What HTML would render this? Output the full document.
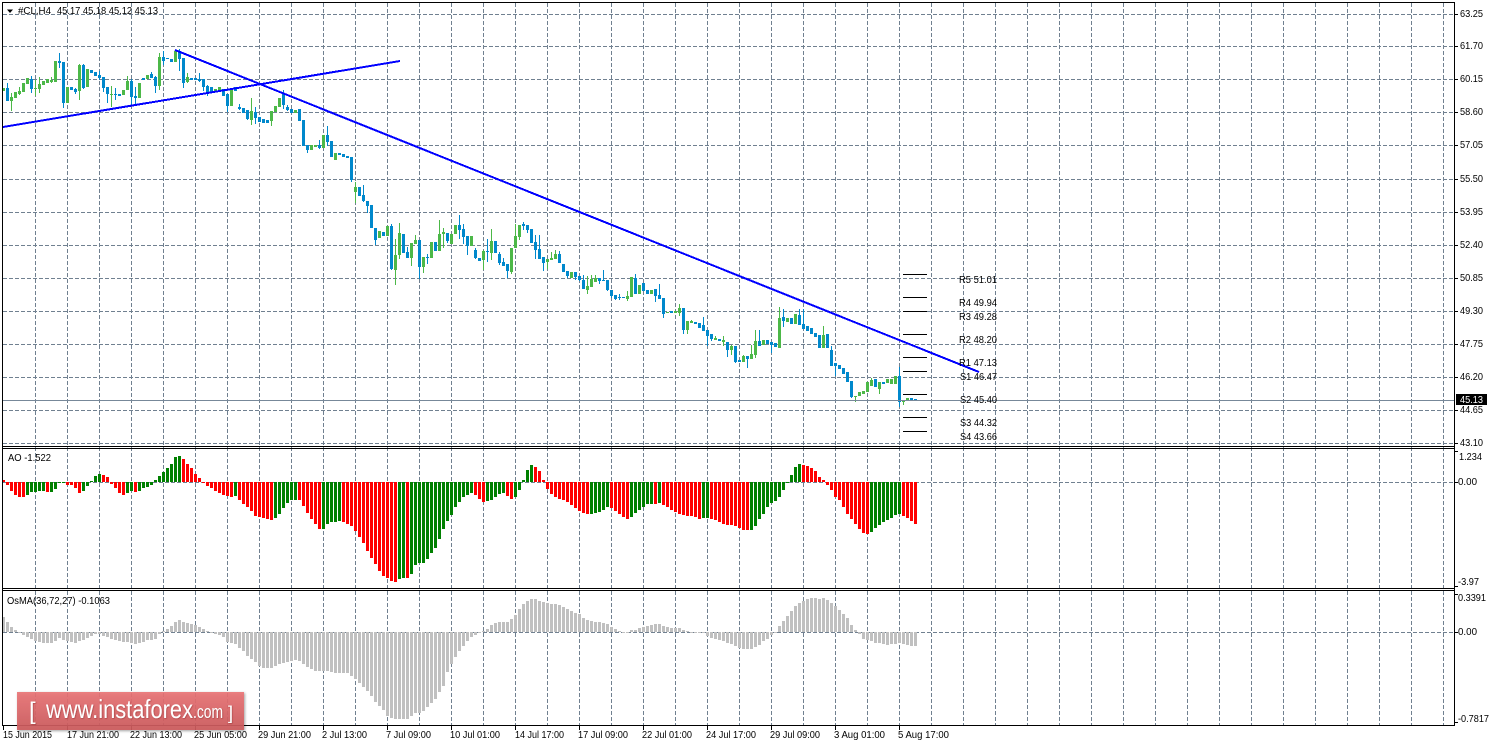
<!DOCTYPE html>
<html>
<head>
<meta charset="utf-8">
<title>#CL,H4</title>
<style>
html,body{margin:0;padding:0;background:#fff;width:1494px;height:743px;overflow:hidden}
svg{display:block;position:absolute;left:0;top:0}
text{font-family:"Liberation Sans",sans-serif;font-size:10.5px;fill:#000}
.s text{font-family:"Liberation Sans",sans-serif;fill:#fff}
</style>
</head>
<body>
<svg xmlns="http://www.w3.org/2000/svg" width="1494" height="743" viewBox="0 0 1494 743">
<g id="grid" stroke="#708090" stroke-width="1" stroke-dasharray="4 2" shape-rendering="crispEdges" fill="none"></g>
<path id="osma" fill="#c0c0c0" shape-rendering="crispEdges"/>
<path id="aog" fill="#008000" shape-rendering="crispEdges"/>
<path id="aor" fill="#ff0000" shape-rendering="crispEdges"/>
<path id="cg" fill="#4cb848" shape-rendering="crispEdges"/>
<path id="cb" fill="#0088cc" shape-rendering="crispEdges"/>
<path d="M3 400.5H1454" stroke="#778899" fill="none" shape-rendering="crispEdges"/>
<path d="M3 127L400 61" stroke="#0000ff" stroke-width="2" fill="none" shape-rendering="crispEdges"/>
<path d="M175 50L979 372" stroke="#0000ff" stroke-width="2" fill="none" shape-rendering="crispEdges"/>
<path d="M903 274.5h24M903 297.5h24M903 311.5h24M903 334.5h24M903 357.5h24M903 371.5h24M903 394.5h24M903 417.5h24M903 431.5h24" stroke="#000" fill="none" shape-rendering="crispEdges"/>
<path d="M2.5 2V726M2 2.5H1455M1454.5 2V726M2 446.5H1455M2 448.5H1455M2 588.5H1455M2 590.5H1455M2 725.5H1455" stroke="#000" fill="none" shape-rendering="crispEdges"/>
<path id="ticks" stroke="#000" fill="none" shape-rendering="crispEdges"/>
<polygon points="7,9.5 13,9.5 10,13" fill="#000"/>
<text x="18" y="14" textLength="33" lengthAdjust="spacingAndGlyphs">#CL,H4</text>
<text x="57" y="14" textLength="101" lengthAdjust="spacingAndGlyphs">45.17 45.18 45.12 45.13</text>
<text x="8" y="461" textLength="43" lengthAdjust="spacingAndGlyphs">AO -1.522</text>
<text x="7" y="604" textLength="103" lengthAdjust="spacingAndGlyphs">OsMA(36,72,27) -0.1063</text>
<g>
<text x="1460" y="17" textLength="23" lengthAdjust="spacingAndGlyphs">63.25</text>
<text x="1460" y="49" textLength="23" lengthAdjust="spacingAndGlyphs">61.70</text>
<text x="1460" y="82" textLength="23" lengthAdjust="spacingAndGlyphs">60.15</text>
<text x="1460" y="115" textLength="23" lengthAdjust="spacingAndGlyphs">58.60</text>
<text x="1460" y="148" textLength="23" lengthAdjust="spacingAndGlyphs">57.05</text>
<text x="1460" y="182" textLength="23" lengthAdjust="spacingAndGlyphs">55.50</text>
<text x="1460" y="215" textLength="23" lengthAdjust="spacingAndGlyphs">53.95</text>
<text x="1460" y="248" textLength="23" lengthAdjust="spacingAndGlyphs">52.40</text>
<text x="1460" y="281" textLength="23" lengthAdjust="spacingAndGlyphs">50.85</text>
<text x="1460" y="314" textLength="23" lengthAdjust="spacingAndGlyphs">49.30</text>
<text x="1460" y="347" textLength="23" lengthAdjust="spacingAndGlyphs">47.75</text>
<text x="1460" y="380" textLength="23" lengthAdjust="spacingAndGlyphs">46.20</text>
<text x="1460" y="413" textLength="23" lengthAdjust="spacingAndGlyphs">44.65</text>
<text x="1460" y="446" textLength="23" lengthAdjust="spacingAndGlyphs">43.10</text>
<rect x="1456" y="394" width="31" height="11" fill="#000"/>
<text x="1460" y="403" textLength="23" lengthAdjust="spacingAndGlyphs" style="fill:#fff">45.13</text>
<text x="1459" y="460" textLength="23" lengthAdjust="spacingAndGlyphs">1.234</text>
<text x="1458" y="485" textLength="19" lengthAdjust="spacingAndGlyphs">0.00</text>
<text x="1458" y="585" textLength="21" lengthAdjust="spacingAndGlyphs">-3.97</text>
<text x="1458" y="601" textLength="28" lengthAdjust="spacingAndGlyphs">0.3391</text>
<text x="1458" y="635" textLength="19" lengthAdjust="spacingAndGlyphs">0.00</text>
<text x="1458" y="722" textLength="31" lengthAdjust="spacingAndGlyphs">-0.7817</text>
</g>
<g>
<text x="959" y="283" textLength="38" lengthAdjust="spacingAndGlyphs">R5 51.01</text>
<text x="959" y="306" textLength="38" lengthAdjust="spacingAndGlyphs">R4 49.94</text>
<text x="959" y="320" textLength="38" lengthAdjust="spacingAndGlyphs">R3 49.28</text>
<text x="959" y="343" textLength="38" lengthAdjust="spacingAndGlyphs">R2 48.20</text>
<text x="959" y="366" textLength="38" lengthAdjust="spacingAndGlyphs">R1 47.13</text>
<text x="960" y="380" textLength="37" lengthAdjust="spacingAndGlyphs">S1 46.47</text>
<text x="960" y="403" textLength="37" lengthAdjust="spacingAndGlyphs">S2 45.40</text>
<text x="960" y="426" textLength="37" lengthAdjust="spacingAndGlyphs">S3 44.32</text>
<text x="960" y="440" textLength="37" lengthAdjust="spacingAndGlyphs">S4 43.66</text>
</g>
<g>
<text x="3" y="738" textLength="49" lengthAdjust="spacingAndGlyphs">15 Jun 2015</text>
<text x="67" y="738" textLength="52" lengthAdjust="spacingAndGlyphs">17 Jun 21:00</text>
<text x="130" y="738" textLength="52" lengthAdjust="spacingAndGlyphs">22 Jun 13:00</text>
<text x="194" y="738" textLength="53" lengthAdjust="spacingAndGlyphs">25 Jun 05:00</text>
<text x="258" y="738" textLength="53" lengthAdjust="spacingAndGlyphs">29 Jun 21:00</text>
<text x="322" y="738" textLength="45" lengthAdjust="spacingAndGlyphs">2 Jul 13:00</text>
<text x="386" y="738" textLength="45" lengthAdjust="spacingAndGlyphs">7 Jul 09:00</text>
<text x="450" y="738" textLength="50" lengthAdjust="spacingAndGlyphs">10 Jul 01:00</text>
<text x="515" y="738" textLength="49" lengthAdjust="spacingAndGlyphs">14 Jul 17:00</text>
<text x="578" y="738" textLength="50" lengthAdjust="spacingAndGlyphs">17 Jul 09:00</text>
<text x="642" y="738" textLength="50" lengthAdjust="spacingAndGlyphs">22 Jul 01:00</text>
<text x="706" y="738" textLength="50" lengthAdjust="spacingAndGlyphs">24 Jul 17:00</text>
<text x="770" y="738" textLength="50" lengthAdjust="spacingAndGlyphs">29 Jul 09:00</text>
<text x="834" y="738" textLength="51" lengthAdjust="spacingAndGlyphs">3 Aug 01:00</text>
<text x="898" y="738" textLength="51" lengthAdjust="spacingAndGlyphs">5 Aug 17:00</text>
</g>
<defs>
<linearGradient id="sg" x1="0" y1="0" x2="0" y2="1"><stop offset="0" stop-color="#ea7375"/><stop offset="1" stop-color="#cc5a5c"/></linearGradient>
<filter id="sh" x="-5%" y="-20%" width="110%" height="140%"><feDropShadow dx="1" dy="1" stdDeviation="1.2" flood-color="#000" flood-opacity=".4"/></filter>
<filter id="st" x="-5%" y="-20%" width="110%" height="140%"><feDropShadow dx=".6" dy=".6" stdDeviation=".5" flood-color="#701010" flood-opacity=".5"/></filter>
</defs>
<rect x="17" y="692" width="227" height="38" fill="url(#sg)" fill-opacity=".9" filter="url(#sh)"/>
<g class="s" filter="url(#st)">
<text x="29" y="719" style="font-size:24px;font-weight:normal">[</text>
<text x="46" y="718" style="font-size:26px" textLength="147" lengthAdjust="spacingAndGlyphs">www.instaforex</text>
<text x="193" y="718" style="font-size:18px" textLength="30" lengthAdjust="spacingAndGlyphs">.com</text>
<text x="228" y="719" style="font-size:18px">]</text>
</g>
</svg>
<script>
(function(){
var d=document;
var g='';
[14,46,79,112,145,179,212,245,278,311,344,377,410,443,482,632].forEach(function(y){g+='M3 '+(y+.5)+'H1454'});
for(var x=35;x<1454;x+=32)g+='M'+(x+.5)+' 3V725';
var p=d.createElementNS('http://www.w3.org/2000/svg','path');p.setAttribute('d',g);d.getElementById('grid').appendChild(p);
var t='';
[14,46,79,112,145,179,212,245,278,311,344,377,410,443,451,482,586,594,632,722].forEach(function(y){t+='M1455 '+(y+.5)+'h3'});
for(var x=3;x<=899;x+=64)t+='M'+(x+.5)+' 726v4';
d.getElementById('ticks').setAttribute('d',t);
function R(i,y,h){return 'M'+(2+4*i)+' '+y+'h3v'+h+'h-3z'}
var ao="2r -3r -9r -13r -15r -15r -13g -10g -10g -9g -9g -10r -10g -7g -1g -1g -3r -3r -6r -11r -9g -4g 1g 6g 8g 7r 5r -2r -6r -11r -13r -11g -9g -10r -9g -6g -5g -3g 2g 6g 10g 14g 18g 25g 26g 23r 18r 14r 8r 4r -1r -4r -6r -9r -11r -13r -14r -15r -14g -18r -22r -25r -29r -34r -35r -36r -37r -38r -36g -32g -26g -21g -18g -18g -18r -24r -31r -37r -42r -47r -47g -42g -40g -40g -39g -40r -42r -44r -49r -55r -61r -69r -76r -82r -89r -94r -96r -99r -100r -97g -96g -96r -92g -83g -81g -81g -77g -71g -66g -57g -47g -39g -33g -25g -20g -15g -13g -11g -13r -17r -20r -19g -18g -15g -12g -11g -14r -17r -15g -8g 2g 12g 17g 15r 11r 2r -7r -12r -15r -17r -18r -20r -23r -26r -29r -31r -32r -32g -31g -30g -28g -25g -26r -29r -32r -35r -37r -35g -31g -28g -25g -22g -22g -22r -21g -23r -25r -28r -30r -32r -33r -34r -34r -35r -37r -36g -36g -37r -38r -40r -42r -43r -43r -44r -46r -48r -48r -48g -44g -37g -32g -25g -21g -19g -15g -8g -1g 7g 15g 18g 17r 16r 14r 11r 5r 2r -3r -8r -15r -18r -25r -32r -37r -42r -47r -51r -52r -50g -46g -43g -40g -38g -36g -33g -32g -34r -36r -39r -42r".split(' ');
var ag='',ar='';
ao.forEach(function(v,i){var n=parseFloat(v),c=v.slice(-1),y=n>0?482-n:482,h=Math.abs(n),s=R(i,y,h);if(c=='g')ag+=s;else ar+=s});
d.getElementById('aog').setAttribute('d',ag);d.getElementById('aor').setAttribute('d',ar);
var o1=[15,10,5,2,-1,-3,-5,-7,-9,-10,-11,-11,-11,-9,-6,-8,-9,-10,-11,-9,-8,-6,-4,-2,-2,-4,-5,-7,-8,-9,-10,-10,-11,-12,-11,-10,-8,-8,-7,-2,1,3,6,10,12,10,9,8,7,5,3,1,-1,-2,-3,-5,-10,-11,-12,-16,-19,-24,-27,-30,-34,-36,-36,-36,-34,-32,-31,-30,-29,-28,-29,-32,-35,-37,-39,-39,-39,-39,-40,-41,-41,-41,-41,-44,-47,-51,-55,-59,-64,-70,-74,-78,-84,-86,-87,-87,-87,-87,-84,-81,-81,-79,-75,-71,-67,-60,-54,-40,-32,-25,-19,-14,-9,-5,-3];
var o2=[129,125,117,105,99,96,96,96,87,75,57,42,33,27,27,33,36,39,42,42,45,51,57,63,69,72,84,90,93,96,96,99,102,111,117,123,126,129,120,120,114,111,108,105,102,102,108,111,114,114,114,120,123,126,129,129,129,138,144,147,150,153,159,162,168,174,177,177,177,171,165,153,147,135,129,108,93,78,63,48,39,33,27,24,24,27,24,30,39,48,60,72,84,105,120,132,147,150,153,159,159,162,165,162,162,159,162,165,168,168];
var os=o1.concat(o2.map(function(z){return Math.round((127-z)/3)}));
var od='';
os.forEach(function(n,i){if(n==0)n=-1;od+=R(i,n>0?632-n:632,Math.abs(n))});
d.getElementById('osma').setAttribute('d',od);
var cg='',cb='',idx=0;
function C(off,str){str.split(' ').forEach(function(e){
 var c=e[0],a=e.slice(1).split(',').map(Number);
 var top=Math.round(off+a[0]/3),bot=Math.round(off+a[1]/3),h=Math.max(1,bot-top);
 var wt=a.length>2&&a[2]?Math.round(off+a[2]/3):top,wb=a.length>3?Math.round(off+a[3]/3):bot;
 if(wb<top+h)wb=top+h;if(wt>top)wt=top;
 var s=R(idx,top,h)+'M'+(3+4*idx)+' '+wt+'h1v'+(wb-wt)+'h-1z';
 if(c=='g')cg+=s;else cb+=s;idx++;
})}
C(0,"g264,272 b264,303,250,303 g291,303,280,333 g276,294 g273,282,262,285 g249,276 g234,252 b237,267,228,280 g264,267,240,288 g252,267,232,279 g243,255 g238,249 g240,246,232,249 g183,246 b183,189,159,204 b186,309,186,324 g261,309 b261,270 b267,276,264,282 g195,273,192,300 b195,264,192,267 g207,261 b210,219 b215,227 b225,234,213,240 b231,264,231,276 b261,282,261,309 g282,285,258,321 b282,285,264,300 b282,288 g270,285 g243,270,228,270 b243,291,237,315 b288,294,262,315 g249,294 b234,240 g225,237 b222,234,216,234 b231,258,228,279 g171,258,160,270 b171,183,152,195 b174,178 b177,186 g153,186 b153,177,147,213 b174,249,174,264 g231,246,219,249 b234,240 b234,240 b237,243,219,246 b237,261,237,273 b258,276,255,288 b261,276 g268,276 g261,272 b267,288 b282,318,282,336 g264,318 b261,273 b321,327,312,330 b324,339 b330,357,330,360 g333,360,294,375 b336,354,321,372 b351,366 b357,369 b360,370 g333,363,333,378 g318,336 g294,321 b282,315,270,327 b321,330,315,333 b327,339 g330,339 b327,363 b360,438 b435,450,435,460 g435,450 g435,441 b435,444,420,447 g405,444 b405,426,378,438 b423,471 g459,480 b459,465 b462,471 b468,474 b471,540,471,546 g561,576,546,608 b561,588 b585,603,555,606 b603,618,603,640");
C(200,"b15,84 b84,120,84,136 g93,114 b96,108 g78,108 b78,207,72,210 g165,210,117,255 g99,165,69,177 b102,159 b156,174,141,174 g129,174,129,198 g120,132,105,132 b120,201,120,237 g171,201,171,219 b171,174,162,192 g126,174 b126,153 g102,153,60,153 g96,102,84,144 b99,123,99,129 g102,132 g75,102 b75,90,45,117 b87,111,72,132 b108,138,108,165 g108,138 b150,174,144,177 b174,183 g153,180,150,210 b153,156,117,186 g123,159,87,180 b123,159 b162,189,156,195 b186,198,174,198 b192,213,192,234 g144,216,144,222 g108,144,72,144 g75,111,75,120 b72,78,66,90 b75,90,75,99 b87,129 b126,150,105,177 b147,177,105,177 b171,189,171,213 g177,186,177,207 g174,180,156,180 g162,177,150,177 b162,189,153,189 b192,216 b213,228,213,234 g216,234 b216,231,216,240 b228,240,228,243 b240,267,225,267 g258,270,228,282 g236,261,225,261 g234,246,225,246 b234,243,234,252 b240,243,210,243 b240,270,240,273 b270,288,270,294 b285,297,285,300 b291,294,282,300 b291,294 g288,297,273,303 g231,291 b234,282,222,282 g255,282 b249,273 b270,282 g270,282 b267,288,267,306 b285,297,252,297 b294,342,294,354 g336,339 b333,339 g333,339 g324,339,312,348");
C(260,"b144,210,144,222 g183,210,183,222 g183,189,180,189 b186,192 b189,204 b195,213,171,213 b210,228,210,258 b222,237,222,243 g234,240,228,240 b237,243 g240,246,228,258 b246,270,246,291 g258,270,255,285 b258,306,258,309 b300,306 g288,306,285,306 b288,297,288,324 g282,297,255,297 g243,285,210,294 b243,258,210,258 g240,255 b240,252 b246,255,246,279 b249,261 g174,264,141,264 b171,183,147,201 g174,186 b174,192 g162,192 b165,195,147,195 b192,207,147,207 b198,213 b204,222 b219,231 b225,264 g225,264,198,264 b222,264 b270,318,258,318 b309,318,309,348 b315,327 b324,342 b336,366 b363,411,363,414 g408,411,408,426 g396,408 g393,402 g366,396 g360,378,354,378 b357,381 g366,387,366,402 b366,372 g357,369 g357,372 g348,372 b348,426,321,441 g420,426,420,435 g414,420 b414,420 b417,422");
d.getElementById('cg').setAttribute('d',cg);d.getElementById('cb').setAttribute('d',cb);
})();
</script>
</body>
</html>
